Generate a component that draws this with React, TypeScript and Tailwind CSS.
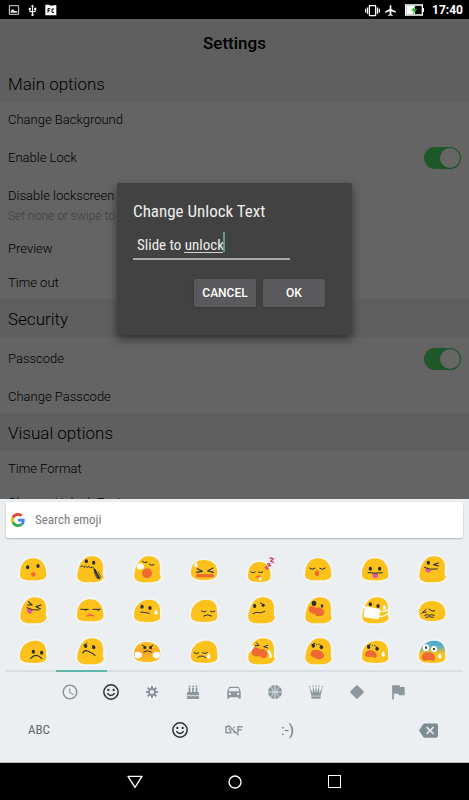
import type { ReactNode } from "react";
import { FaBirthdayCake } from "react-icons/fa";
import {
  MdAccessTime,
  MdAirplanemodeActive,
  MdBackspace,
  MdDirectionsCar,
  MdFlag,
  MdUsb,
  MdVibration,
} from "react-icons/md";

const DARK = "#2b2f33";
const ORANGE = "#ee6a32";
const PINK = "#e0569b";

const BODIES = {
  dome: "M9 62C9 30 25 13 48 13S88 30 88 62C88 75 75 79 48 79S9 75 9 62Z",
  tall: "M10 62C14 30 28 7 54 7C76 7 87 20 87 40C87 55 84 60 89 67C91 71 87 73 85 75C80 83 66 85 48 85C25 85 8 82 10 62Z",
  lean: "M9 58C11 30 30 14 55 14C78 14 88 30 87 50C86 56 89 61 88 67C85 79 70 81 48 81C22 81 7 78 9 58Z",
  small: "M9 66C9 38 23 24 43 24S77 38 77 66C77 80 64 84 43 84S9 80 9 66Z",
  flat: "M9 54C9 30 25 18 48 18S88 32 88 54C88 72 75 78 48 78S9 72 9 54Z",
};

type EmojiItem = { name: string; body: keyof typeof BODIES; fill?: string; face: ReactNode };

function Dot({ x, y, r = 5 }: { x: number; y: number; r?: number }) {
  return <ellipse cx={x} cy={y} rx={r} ry={r + 1} fill={DARK} />;
}

function Line({ d, w = 3.5, color = DARK }: { d: string; w?: number; color?: string }) {
  return (
    <path d={d} fill="none" stroke={color} strokeWidth={w} strokeLinecap="round" strokeLinejoin="round" />
  );
}

function Drop({ x, y }: { x: number; y: number }) {
  return <path d={`M${x} ${y - 9}c3 5 5 8 5 12a5 5 0 0 1-10 0c0-4 2-7 5-12z`} fill="#fff" />;
}

const EMOJIS: EmojiItem[] = [
  {
    name: "hushed",
    body: "dome",
    face: <><Dot x={32} y={40} /><Dot x={63} y={36} /><circle cx={49} cy={61} r={7} fill={ORANGE} /></>,
  },
  {
    name: "zipper mouth",
    body: "tall",
    face: (
      <>
        <Dot x={37} y={22} /><Dot x={59} y={26} />
        <Line d="M20 38l5-3 5 5 5-4 5 5 5-4 5 5 5-3 6 5" w={3} />
        <Line d="M62 48l5 10M70 63l4 8" w={7} />
        <Line d="M61 56l7 16 9 3 3-8-8-14" w={2} />
      </>
    ),
  },
  {
    name: "yawning",
    body: "tall",
    face: (
      <>
        <Line d="M34 22q7 6 14 3M55 31q6 6 14 1" w={3} />
        <ellipse cx={48} cy={58} rx={15} ry={15} fill={ORANGE} />
        <path d="M17 39q0-10 10-11l9 2q5 6 2 13-9 6-18 2z" fill="#fff" />
      </>
    ),
  },
  {
    name: "confounded",
    body: "flat",
    face: (
      <>
        <Line d="M28 44l15 8-17 3M75 42l-16 9 17 4" />
        <rect x={24} y={60} width={54} height={10} rx={5} fill={ORANGE} />
        <Drop x={24} y={32} />
      </>
    ),
  },
  {
    name: "sleeping",
    body: "small",
    face: (
      <>
        <Line d="M18 54q6 6 13 0M40 54q6 5 13 0" w={3} />
        <path d="M32 72q2-8 9-8t8 8q-8-3-17 0z" fill={ORANGE} />
        <path d="M43 70h6v8a3 3 0 0 1-6 0z" fill="#fff" />
        <Line d="M61 40l5-1-2 6 5-1M68 30l6-1-3 7 6-1M75 12l10 2-8 8 9 3" w={4} color="#d8397f" />
      </>
    ),
  },
  {
    name: "relieved",
    body: "dome",
    face: (
      <>
        <Line d="M22 42q8 8 17 1M53 43q8 7 17-1" w={3} />
        <ellipse cx={45} cy={58} rx={6} ry={9} fill={ORANGE} />
      </>
    ),
  },
  {
    name: "tongue out",
    body: "dome",
    face: (
      <>
        <Dot x={34} y={44} /><Dot x={62} y={44} />
        <path d="M41 57h16v8a8 7 0 0 1-16 0z" fill={PINK} />
        <Line d="M27 56q21 3 43 0" w={3} />
      </>
    ),
  },
  {
    name: "winking",
    body: "tall",
    face: (
      <>
        <Dot x={37} y={26} /><Line d="M67 27l-14 5 14 4" />
        <path d="M28 42l17 5q-2 9-10 9-8-3-7-14z" fill={PINK} />
        <Line d="M25 40q18 9 39 5" w={3} />
      </>
    ),
  },
  {
    name: "squinting",
    body: "tall",
    face: (
      <>
        <Line d="M34 20l11 10-14 0M72 30l-15 5 13 6" />
        <path d="M29 40l19 5q-3 11-11 11-9-4-8-16z" fill={PINK} />
        <Line d="M30 38q15 9 36 7" w={3} />
      </>
    ),
  },
  {
    name: "unamused",
    body: "dome",
    face: (
      <>
        <Line d="M20 43h23M56 43h23" w={3} />
        <path d="M29 43h12q-5 8-12 0zM66 43h12q-5 8-12 0z" fill={DARK} />
        <path d="M36 65q2-8 13-8t13 8q-13-4-26 0z" fill={ORANGE} />
      </>
    ),
  },
  {
    name: "sweating",
    body: "lean",
    face: <><Dot x={33} y={35} /><Dot x={57} y={39} /><Line d="M29 51q12 1 26 4" w={3} /><Drop x={75} y={51} /></>,
  },
  {
    name: "pensive",
    body: "lean",
    face: <Line d="M40 48q6 5 14 1M67 49q6 4 13 0M47 63q12-8 24 0" w={3} />,
  },
  {
    name: "confused",
    body: "tall",
    face: (
      <>
        <Dot x={29} y={33} /><Dot x={54} y={31} r={4} />
        <Line d="M46 24l14 7M24 56q10-7 17-3 8 2 18-4" w={3} />
      </>
    ),
  },
  {
    name: "astonished",
    body: "tall",
    face: (
      <>
        <Dot x={36} y={25} r={7} /><Dot x={60} y={33} r={4} />
        <path d="M21 46q-4-12 8-13 7 0 12 5 8-3 16 1 11 5 10 14-2 10-13 11-12 1-17-8-12 2-16-10z" fill={ORANGE} />
      </>
    ),
  },
  {
    name: "face mask",
    body: "tall",
    face: (
      <>
        <Dot x={34} y={28} /><Dot x={57} y={33} />
        <Line d="M62 49q14 2 25-5M62 64q14 2 24-8M12 35l6 4" color="#fff" />
        <path d="M19 34l41 7q5 1 4 5l-4 23q-1 5-6 4l-37-6q-4-1-3-5l3-24q1-4 2-4z" fill="#fff" />
        <Drop x={76} y={37} />
      </>
    ),
  },
  {
    name: "persevering",
    body: "flat",
    face: <Line d="M17 55l13-12M22 52l9-1M39 43q8 7 17 5M26 61q7-5 14 0 7-4 15 0M29 67q12-4 23 0" w={3} />,
  },
  {
    name: "disappointed",
    body: "lean",
    face: <><Dot x={49} y={47} /><Dot x={74} y={50} /><Line d="M41 67q16-18 34 1" /></>,
  },
  {
    name: "worried",
    body: "tall",
    face: (
      <>
        <Dot x={35} y={30} /><Dot x={59} y={34} />
        <Line d="M29 28l10-7M54 27l9 8" w={2} />
        <Line d="M26 51q7-13 21-3 9 3 16 10" />
      </>
    ),
  },
  {
    name: "huffing",
    body: "flat",
    fill: "url(#huff)",
    face: (
      <>
        <Dot x={41} y={35} r={4} /><Dot x={59} y={35} r={4} />
        <Line d="M34 28l11 5M66 28l-10 5M38 48q11-8 23 0" w={3} />
        <path d="M12 52q2-9 8-3 5-6 7 1 7 0 6 7 0 8-7 8-5 6-9 1-9-1-5-14zM86 52q-2-9-8-3-5-6-7 1-7 0-6 7 0 8 7 8 5 6 9 1 9-1 5-14z" fill="#fff" />
      </>
    ),
  },
  {
    name: "crying",
    body: "lean",
    face: <><Line d="M18 50q6 6 14 1M44 51q7 4 14-1M29 64q11-9 24 1" w={3} /><Drop x={62} y={60} /></>,
  },
  {
    name: "loudly crying",
    body: "tall",
    face: (
      <>
        <Line d="M34 20l8 8-11 1M68 28l-12 4 12 4" w={3} />
        <path d="M18 47q1-14 14-13 8 0 13 6 10-3 18 4 8 8 3 17-6 9-15 4-5-2-8-5-10 4-17-1-6-3-8-12z" fill={ORANGE} />
        <path d="M26 27q-8 0-8 9-7 3-5 13l5 1q0-7 4-9 7-5 4-14zM69 41q9 2 8 10 6 6 2 14h-6q2-8-2-12-5-5-2-12z" fill="#fff" />
      </>
    ),
  },
  {
    name: "frowning open mouth",
    body: "tall",
    face: (
      <>
        <Dot x={34} y={29} /><Dot x={58} y={34} />
        <Line d="M30 26l9-4M56 28l7 5M44 25h1M51 25h1" w={3} />
        <path d="M26 54q1-13 15-13 11 0 18 6 9 7 7 15-2 7-12 8-13 1-18-6-11-1-10-10z" fill={ORANGE} />
      </>
    ),
  },
  {
    name: "anguished",
    body: "lean",
    face: (
      <>
        <Dot x={29} y={33} /><Dot x={54} y={38} />
        <Line d="M25 30l9-5M51 32l8 6M40 28h1M47 29h1" w={3} />
        <path d="M18 60q-2-15 14-17 13-1 19 9 5 9 0 14-7-3-16-4-10 2-17-2z" fill={ORANGE} />
        <Drop x={73} y={54} />
      </>
    ),
  },
  {
    name: "screaming",
    body: "lean",
    fill: "url(#fear)",
    face: (
      <>
        <circle cx={30} cy={35} r={10} fill="#fff" /><circle cx={54} cy={39} r={9} fill="#fff" />
        <Dot x={30} y={35} r={3} /><Dot x={54} y={39} r={3} />
        <path d="M17 66q-1-15 17-17 20 0 23 13 1 8-4 14-7-5-16-4-16 7-20-6z" fill={ORANGE} />
        <Drop x={72} y={60} />
      </>
    ),
  },
];

function Emoji({ item }: { item: EmojiItem }) {
  return (
    <svg viewBox="0 0 96 96" className="size-8 overflow-visible">
      <path d={BODIES[item.body]} fill="none" stroke="#fff" strokeOpacity={0.3} strokeWidth={12} />
      <path d={BODIES[item.body]} fill={item.fill ?? "#fcc21b"} />
      {item.face}
    </svg>
  );
}

function Smiley() {
  return (
    <svg viewBox="0 0 48 48" className="size-4" fill="none" stroke="#263238" strokeWidth={4.5}>
      <circle cx={24} cy={24} r={21.5} />
      <circle cx={16} cy={18} r={3.4} fill="#263238" stroke="none" />
      <circle cx={32} cy={18} r={3.4} fill="#263238" stroke="none" />
      <path d="M13 28q11 13 22 0" />
    </svg>
  );
}

function Flower() {
  return (
    <svg viewBox="0 0 42 42" className="size-3.5" stroke="currentColor" fill="none">
      <circle cx={21} cy={21} r={9} strokeWidth={6} />
      <path
        d="M21 12V3M21 30v9M12 21H3M30 21h9M15 15L8 8M27 15l7-7M15 27l-7 7M27 27l7 7"
        strokeWidth={6}
      />
    </svg>
  );
}

function Ball() {
  return (
    <svg viewBox="0 0 42 42" className="size-3.5">
      <circle cx={21} cy={21} r={21} fill="currentColor" />
      <path
        d="M21 0v42M0 21h42M7 5q9 7 9 16T7 37M35 5q-9 7-9 16t9 16"
        fill="none"
        stroke="#eceff1"
        strokeWidth={2.5}
      />
    </svg>
  );
}

function Crown() {
  return (
    <svg viewBox="0 0 42 42" className="size-3.5" fill="currentColor">
      <path d="M7 32L1 6l10 19 1-21 6 20 3-22 3 22 6-20 1 21L41 6l-6 26z" />
      <circle cx={2} cy={5} r={2} />
      <circle cx={12} cy={3} r={2} />
      <circle cx={21} cy={2} r={2} />
      <circle cx={30} cy={3} r={2} />
      <circle cx={40} cy={5} r={2} />
      <path d="M7 34h28v7H7z" />
    </svg>
  );
}

function Diamond() {
  return (
    <svg viewBox="0 0 42 42" className="size-3.5" fill="currentColor">
      <path d="M18 2q3-3 6 0l16 16q3 3 0 6L24 40q-3 3-6 0L2 24q-3-3 0-6z" />
    </svg>
  );
}

function GifOff() {
  return (
    <svg viewBox="0 0 54 36" className="h-3 w-[18px]" fill="none" stroke="currentColor" strokeWidth={4.5}>
      <path d="M11 8H3v18h14v-7l-6-5M27 22v6M27 8v5M39 27V8h14M39 17h11M9 3l32 31" />
    </svg>
  );
}

function GoogleLogo() {
  return (
    <svg viewBox="0 0 48 48" className="size-3.5 shrink-0">
      <path fill="#ea4335" d="M24 9.5c3.5 0 6.7 1.2 9.2 3.6l6.9-6.9C35.9 2.4 30.5 0 24 0 14.6 0 6.5 5.4 2.6 13.2l8 6.2C12.4 13.7 17.7 9.5 24 9.5z" />
      <path fill="#4285f4" d="M47 24.5c0-1.6-.2-3.1-.4-4.5H24v9h12.9c-.6 3-2.2 5.5-4.7 7.2l7.7 6C44.4 38 47 31.8 47 24.5z" />
      <path fill="#fbbc05" d="M10.5 28.6a14.5 14.5 0 0 1 0-9.2l-8-6.2a24 24 0 0 0 0 21.6z" />
      <path fill="#34a853" d="M24 48c6.5 0 11.9-2.1 15.9-5.8l-7.7-6c-2.2 1.5-4.9 2.3-8.2 2.3-6.3 0-11.6-4.2-13.5-9.9l-8 6.2C6.5 42.6 14.6 48 24 48z" />
    </svg>
  );
}

function StatusBar() {
  return (
    <header className="flex h-[19px] shrink-0 items-center justify-between bg-black pt-px pr-1.5 pl-2 text-white">
      <div className="flex items-center gap-1.5">
        <svg viewBox="0 0 36 36" className="size-3" fill="none" stroke="#ddd" strokeWidth={3}>
          <path d="M4 5h28v26H4z" />
          <path d="M8 26v-6l6-5 7 6 7 1v4z" fill="#ddd" stroke="none" />
        </svg>
        <MdUsb className="size-[13px]" />
        <svg viewBox="0 0 36 36" className="size-3">
          <path d="M1 2h12l3 3 18-2v31H1z" fill="#fff" />
          <path d="M9 26V14h7M9 20h6M27 15h-6v10h6" fill="none" stroke="#000" strokeWidth={3} />
        </svg>
      </div>
      <div className="flex items-center">
        <MdVibration className="size-[15px]" />
        <MdAirplanemodeActive className="ml-1 size-[13px]" />
        <svg viewBox="0 0 57 36" className="ml-2 h-3 w-[19px]">
          <path d="M2 3h50v30H2z" fill="none" stroke="#fff" strokeWidth={4} />
          <path d="M4 5h26v26H4zM53 12h4v12h-4z" fill="#fff" />
          <path d="M32 5L18 20h9l-4 12 14-16h-9z" fill="#14b814" />
        </svg>
        <span className="ml-2 text-[12px] leading-4 font-bold">17:40</span>
      </div>
    </header>
  );
}

function SectionTitle({ children }: { children: ReactNode }) {
  return (
    <h2 className="flex h-[38px] items-center bg-[#eeeeee] px-2 pt-0.5 text-[17px] font-light">
      {children}
    </h2>
  );
}

function Row({ children }: { children: ReactNode }) {
  return <div className="flex h-[34px] items-center px-2 pt-0.5">{children}</div>;
}

function ToggleRow({ label }: { label: string }) {
  return (
    <label className="flex h-[42px] items-center justify-between px-2 pt-0.5">
      {label}
      <input
        type="checkbox"
        defaultChecked
        className="relative h-[22px] w-[37px] appearance-none rounded-full bg-[#4cd964] before:absolute before:top-px before:right-px before:size-5 before:rounded-full before:bg-white before:shadow"
      />
    </label>
  );
}

function Settings() {
  return (
    <main className="min-h-0 flex-1 overflow-hidden bg-[#fafafa] text-[13px] leading-5 font-light text-black">
      <h1 className="flex h-[45px] items-center justify-center bg-[#eeeeee] pt-0.5 text-[17px] font-medium">
        Settings
      </h1>
      <SectionTitle>Main options</SectionTitle>
      <Row>Change Background</Row>
      <ToggleRow label="Enable Lock" />
      <Row>Disable lockscreen</Row>
      <p className="-mt-1 h-[23px] px-2 text-[12px] leading-4 text-[#a0a0a0]">Set none or swipe to a</p>
      <Row>Preview</Row>
      <Row>Time out</Row>
      <SectionTitle>Security</SectionTitle>
      <ToggleRow label="Passcode" />
      <Row>Change Passcode</Row>
      <SectionTitle>Visual options</SectionTitle>
      <Row>Time Format</Row>
      <Row>Change Unlock Text</Row>
    </main>
  );
}

function UnlockTextDialog() {
  return (
    <div className="absolute inset-0 flex items-center justify-center bg-black/60">
      <div
        role="dialog"
        aria-labelledby="dialog-title"
        className="w-[235px] rounded-xs bg-[#424242] px-4 pt-4 pb-7 text-[#eeeeee] shadow-[0_4px_10px_rgba(0,0,0,0.5)]"
      >
        <h2 id="dialog-title" className="font-['Roboto_Condensed',Roboto,sans-serif] text-[17px] leading-6">
          Change Unlock Text
        </h2>
        <div className="relative mt-[9px] w-[157px]">
          <input
            type="text"
            aria-labelledby="dialog-title"
            defaultValue="Slide to unlock"
            className="block h-7 w-full border-b-2 border-[#a8a8a8] bg-transparent px-1 font-['Roboto_Condensed',Roboto,sans-serif] text-[15px] leading-6 outline-none"
          />
          <span className="absolute top-5 left-[51px] h-px w-[39px] bg-[#d0d0d0]" />
          <span className="absolute top-0 left-[90px] h-5 w-0.5 bg-[#5a9c93]" />
        </div>
        <div className="mt-[19px] mr-[11px] flex justify-end gap-[7px] text-[12px] font-medium text-white">
          <button className="h-7 w-[62px] rounded-xs bg-[#5a595b] shadow-sm">CANCEL</button>
          <button className="h-7 w-[62px] rounded-xs bg-[#5a595b] shadow-sm">OK</button>
        </div>
      </div>
    </div>
  );
}

const CATEGORIES: { name: string; icon: ReactNode }[] = [
  { name: "Recent", icon: <MdAccessTime className="size-[18px]" /> },
  { name: "Smileys", icon: <Smiley /> },
  { name: "Nature", icon: <Flower /> },
  { name: "Food", icon: <FaBirthdayCake className="size-3.5" /> },
  { name: "Travel", icon: <MdDirectionsCar className="size-[18px]" /> },
  { name: "Activity", icon: <Ball /> },
  { name: "Objects", icon: <Crown /> },
  { name: "Symbols", icon: <Diamond /> },
  { name: "Flags", icon: <MdFlag className="size-[20px]" /> },
];

function Keyboard() {
  return (
    <section className="shrink-0 border-b border-[#b8babb] bg-[#eceff1] pt-[3px] text-[#8b979c]">
      <label className="mx-1.5 flex h-9 items-center gap-2.5 rounded-xs bg-white pl-[5px] shadow-[0_1px_2px_rgba(0,0,0,0.25)]">
        <GoogleLogo />
        <input
          type="search"
          placeholder="Search emoji"
          className="min-w-0 flex-1 bg-transparent font-['Roboto_Condensed',Roboto,sans-serif] text-[13px] outline-none placeholder:text-[#7b7b7b]"
        />
      </label>
      <div className="mt-[11px] grid grid-cols-8 pr-2 pl-1">
        {EMOJIS.map((item) => (
          <button key={item.name} aria-label={item.name} className="flex h-[41px] items-center justify-center">
            <Emoji item={item} />
          </button>
        ))}
      </div>
      <div className="-mt-0.5 ml-[5px] mr-1.5 grid h-0.5 grid-cols-9 bg-[#d9dee0]">
        <span className="col-start-2 bg-[#5fb8a9]" />
      </div>
      <div className="flex h-10 items-center justify-center pr-0.5">
        {CATEGORIES.map(({ name, icon }) => (
          <button key={name} aria-label={name} className="flex w-[41px] justify-center">
            {icon}
          </button>
        ))}
      </div>
      <div className="flex h-[50px] items-start justify-between pr-2.5 pb-3 pl-2">
        <button className="h-9 w-[62px] font-['Roboto_Condensed',Roboto,sans-serif] text-[13px] text-[#5f6b70]">
          ABC
        </button>
        <div className="flex">
          <button aria-label="Emoji" className="flex h-9 w-[54px] items-center justify-center">
            <Smiley />
          </button>
          <button aria-label="GIF" className="flex h-9 w-[54px] items-center justify-center">
            <GifOff />
          </button>
          <button className="h-9 w-[54px] text-[15px] text-[#6d797e]">:-)</button>
        </div>
        <button aria-label="Backspace" className="flex h-9 w-[62px] items-center justify-center text-[#7f8c91]">
          <MdBackspace className="size-[19px]" />
        </button>
      </div>
    </section>
  );
}

function NavBar() {
  return (
    <nav className="flex h-[37px] shrink-0 items-center justify-center bg-black text-white">
      <button aria-label="Back" className="flex w-[100px] justify-center">
        <svg viewBox="0 0 48 42" className="h-3.5 w-4" fill="none" stroke="currentColor" strokeWidth={4}>
          <path d="M3 4h42L24 37z" strokeLinejoin="round" />
        </svg>
      </button>
      <button aria-label="Home" className="flex w-[100px] justify-center">
        <svg viewBox="0 0 42 42" className="size-3.5" fill="none" stroke="currentColor" strokeWidth={4}>
          <circle cx={21} cy={21} r={18} />
        </svg>
      </button>
      <button aria-label="Overview" className="flex w-[100px] justify-center">
        <span className="size-[13px] border border-white" />
      </button>
    </nav>
  );
}

export default function App() {
  return (
    <div className="flex h-screen flex-col overflow-hidden font-['Roboto',sans-serif]">
      <svg className="absolute size-0">
        <defs>
          <linearGradient id="fear" x1="0" y1="0" x2="0" y2="1">
            <stop offset="0" stopColor="#3fa9dc" />
            <stop offset="0.25" stopColor="#62b0b8" />
            <stop offset="0.6" stopColor="#fcc21b" />
          </linearGradient>
          <linearGradient id="huff" x1="0" y1="0" x2="0" y2="1">
            <stop offset="0" stopColor="#fcc21b" />
            <stop offset="0.5" stopColor="#f9a825" />
            <stop offset="1" stopColor="#fcc21b" />
          </linearGradient>
        </defs>
      </svg>
      <StatusBar />
      <div className="relative flex min-h-0 flex-1 flex-col">
        <Settings />
        <UnlockTextDialog />
      </div>
      <Keyboard />
      <NavBar />
    </div>
  );
}
